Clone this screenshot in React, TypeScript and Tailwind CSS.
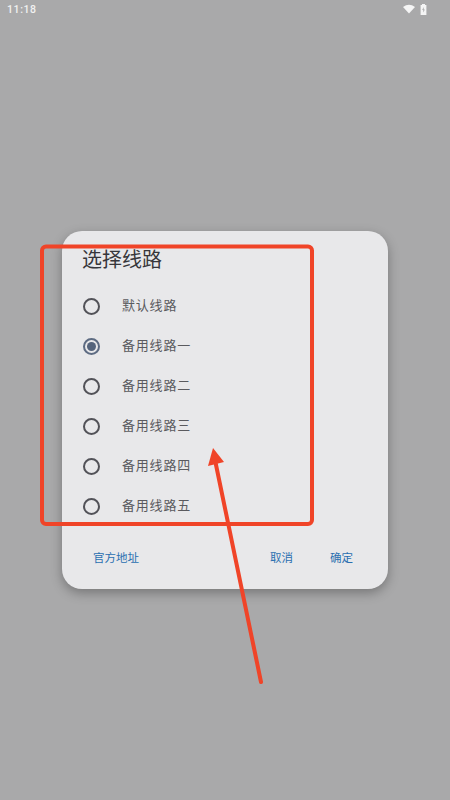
const font = 'font-["Roboto","Noto_Sans_CJK_SC",sans-serif]'

const routes = ['默认线路', '备用线路一', '备用线路二', '备用线路三', '备用线路四', '备用线路五']

function Radio({ checked }: { checked: boolean }) {
  return (
    <span
      className={
        'flex h-[17px] w-[17px] items-center justify-center rounded-full border-2 ' +
        (checked ? 'border-[#5d6b82]' : 'border-[#525258]')
      }
    >
      {checked && <span className="h-[9px] w-[9px] rounded-full bg-[#55647c]" />}
    </span>
  )
}

export default function App() {
  return (
    <div className={`relative flex h-[800px] w-[450px] flex-col overflow-hidden bg-[#a9a9aa] ${font}`}>
      {/* Status bar */}
      <div className="flex h-[20px] items-center justify-between pl-[7px] pr-[23px]">
        <span className="text-[10.5px] font-medium tracking-[0.6px] text-[#f1f1f1]">11:18</span>
        <div className="-mt-[2px] flex items-center gap-[5px]">
          <svg width="12" height="10" viewBox="0 0 12 10" fill="#f5f5f5">
            <path d="M0 3 Q6 -1.6 12 3 L6 9.6 Z" />
          </svg>
          <svg width="7" height="11" viewBox="0 0 7 11">
            <path d="M2 0h3v1h1.4v10H.6V1H2z" fill="#f5f5f5" />
            <path d="M3.7 3 2.2 6h1.1v2.4L4.8 5.4H3.7z" fill="#a9a9aa" />
          </svg>
        </div>
      </div>

      {/* Dialog */}
      <div className="ml-[62px] mt-[211px] flex h-[358px] w-[326px] flex-col rounded-[20px] bg-[#e8e8ea] shadow-[0_4px_12px_rgba(0,0,0,0.3)]">
        <h2 className="pl-[20px] pt-[15px] text-[20px] font-normal leading-[28px] text-[#36363a]">选择线路</h2>
        <ul className="mt-[12px] flex flex-col">
          {routes.map((r, i) => (
            <li key={r} className="flex h-[40px] items-center pl-[21px]">
              <Radio checked={i === 1} />
              <span className="ml-[22px] text-[13px] tracking-[0.8px] text-[#5a5a5e]">{r}</span>
            </li>
          ))}
        </ul>
        <div className="mt-[21px] flex items-center pl-[31px] pr-[35px] text-[11.5px] leading-[22px] text-[#2a6fb0]">
          <span>官方地址</span>
          <span className="ml-auto">取消</span>
          <span className="ml-[37px]">确定</span>
        </div>
      </div>

      {/* Red annotation drawn over the screenshot */}
      <svg className="absolute inset-0" width="450" height="800" viewBox="0 0 450 800" fill="none">
        <rect x="42" y="246.5" width="270" height="277.5" rx="4" stroke="#f04428" strokeWidth="4" />
        <path d="M261 682 L215 460" stroke="#f04428" strokeWidth="4" strokeLinecap="round" />
        <path d="M213 448 L224 462 L208 466 Z" fill="#f04428" />
      </svg>
    </div>
  )
}
